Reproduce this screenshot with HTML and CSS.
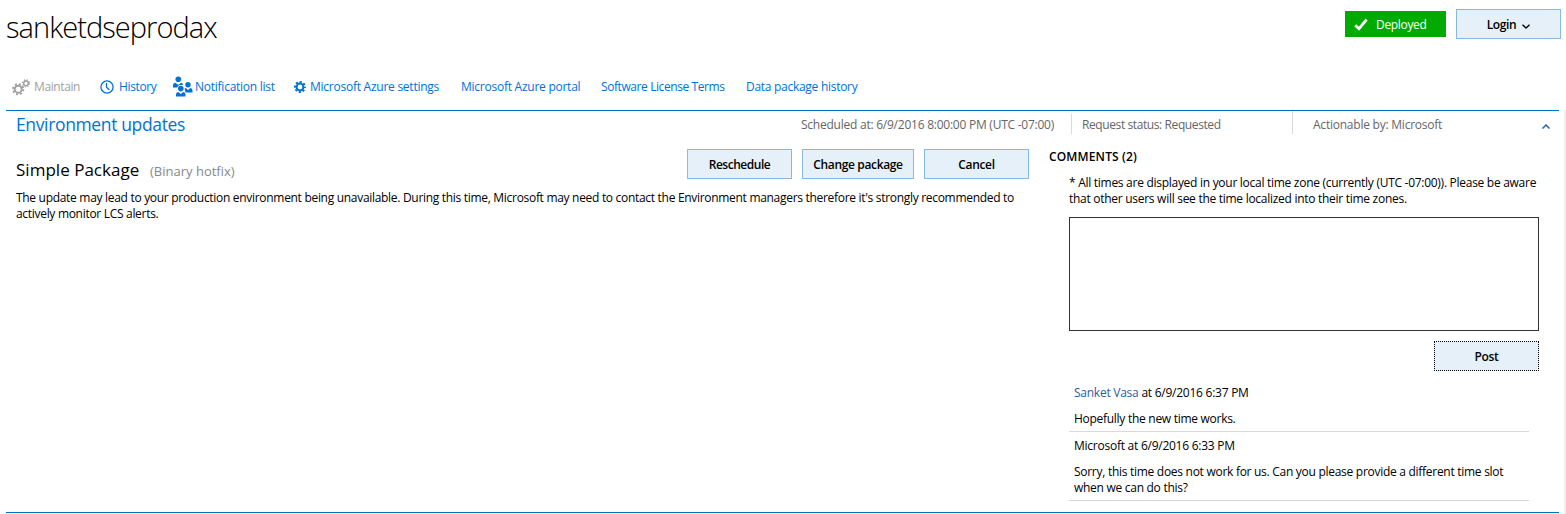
FILE: index.html
```html
<!DOCTYPE html>
<html lang="en">
<head>
<meta charset="utf-8">
<title>sanketdseprodax</title>
<link rel="stylesheet" href="styles.css">
</head>
<body>
<div class="page">
  <header class="top">
    <h1 class="title">sanketdseprodax</h1>
    <div class="status">
      <svg class="check" viewBox="0 0 14 13"><path d="M1.2 7.2 5 10.8 12.6 1.5" fill="none" stroke="#fff" stroke-width="2.8"/></svg>
      <span>Deployed</span>
    </div>
    <button class="btn login">Login<svg class="caret" viewBox="0 0 8 5"><path d="M.5.7 4 4 7.5.7" fill="none" stroke="#000" stroke-width="1.3"/></svg></button>
  </header>
  <nav class="toolbar">
    <a class="tool maintain"><svg class="gears" viewBox="0 0 18 17"><g fill="none" stroke="#a0a0a0"><circle cx="6.2" cy="10.2" r="3.5" stroke-width="1.9"/><circle cx="6.2" cy="10.2" r="5.1" stroke-width="2" stroke-dasharray="2 2.005"/><circle cx="14" cy="4.3" r="2.3" stroke-width="1.4"/><circle cx="14" cy="4.3" r="3.5" stroke-width="1.2" stroke-dasharray="1.4 1.349"/></g></svg>Maintain</a>
    <a class="tool history"><svg class="clock" viewBox="0 0 14 14"><g fill="none" stroke="#0072d6" stroke-width="1.3"><circle cx="7" cy="7" r="6.1"/><path d="M6.5 3v4.3L9.4 10"/></g></svg>History</a>
    <a class="tool notify"><svg class="people" viewBox="0 0 20 21"><g fill="#0072d6"><circle cx="5.3" cy="3.3" r="2.8"/><path d="M0 11.500V9.300Q0 7 2.500 6.800L5.200 9 8 6.800Q10 7 10 8.800L5 11.500Z"/><circle cx="15" cy="8.800" r="2.700"/><path d="M11.500 12.500 12.800 12 15 14 17.300 12Q19.500 12.200 19.500 14.500V16.500H12.500Z"/><circle cx="7.800" cy="12.600" r="3.600" fill="#fff"/><circle cx="7.800" cy="12.600" r="2.800"/><path d="M3 20.500V18.500Q3 16.300 5.200 16.100L7.800 18 10.300 16.100Q12.500 16.300 12.500 18.500V20.500Z"/></g></svg>Notification list</a>
    <a class="tool settings"><svg class="gear" viewBox="0 0 12 12"><g fill="none" stroke="#0072d6"><circle cx="6" cy="6" r="3.4" stroke-width="2"/><circle cx="6" cy="6" r="5" stroke-width="2" stroke-dasharray="2.100 1.827" stroke-dashoffset="1"/></g></svg>Microsoft Azure settings</a>
    <a class="tool portal">Microsoft Azure portal</a>
    <a class="tool terms">Software License Terms</a>
    <a class="tool data">Data package history</a>
  </nav>
  <div class="panel">
    <section class="updates">
      <div class="summary">
        <h2 class="heading">Environment updates</h2>
        <div class="fact scheduled">Scheduled at: 6/9/2016 8:00:00 PM (UTC -07:00)</div>
        <div class="fact request">Request status: Requested</div>
        <div class="fact action">Actionable by: Microsoft</div>
        <svg class="collapse" viewBox="0 0 8 5"><path d="M.5 4.500 4 1 7.500 4.500" fill="none" stroke="#2465b0" stroke-width="1.500"/></svg>
      </div>
      <div class="body">
        <div class="details">
          <div class="package">
            <h3 class="name">Simple Package</h3>
            <span class="kind">(Binary hotfix)</span>
            <div class="actions">
              <button class="btn reschedule">Reschedule</button>
              <button class="btn wide">Change package</button>
              <button class="btn">Cancel</button>
            </div>
          </div>
          <p class="warning">The update may lead to your production environment being unavailable. During this time, Microsoft may need to contact the Environment managers therefore it's strongly recommended to<br>actively monitor LCS alerts.</p>
        </div>
        <aside class="comments">
          <h4 class="count">COMMENTS (2)</h4>
          <p class="note">* All times are displayed in your local time zone (currently (UTC -07:00)). Please be aware<br>that other users will see the time localized into their time zones.</p>
          <textarea class="entry"></textarea>
          <button class="btn post">Post</button>
          <article class="comment">
            <p class="author"><a class="person">Sanket Vasa</a> at 6/9/2016 6:37 PM</p>
            <p class="text">Hopefully the new time works.</p>
          </article>
          <article class="comment">
            <p class="author">Microsoft at 6/9/2016 6:33 PM</p>
            <p class="text">Sorry, this time does not work for us. Can you please provide a different time slot<br>when we can do this?</p>
          </article>
        </aside>
      </div>
    </section>
    <div class="track"></div>
  </div>
</div>
</body>
</html>
```
FILE: styles.css
```css
* { box-sizing: border-box; }
body { margin: 0; background: #fff; color: #000; font: 12px/16px "Open Sans", "Noto Sans", sans-serif; letter-spacing: -.28px; }
h1, h2, h3, h4, p { margin: 0; font-weight: 400; white-space: nowrap; }
svg { display: block; flex: none; }
.page { height: 514px; overflow: hidden; display: flex; flex-direction: column; }

.top { height: 70px; display: flex; align-items: flex-start; padding: 9px 5px 0 6px; }
.title { flex: 1; font-size: 29px; line-height: 36px; font-weight: 300; letter-spacing: -.95px; }
.status { width: 101px; height: 26px; margin: 2px 10px 0 0; padding: 2px 0 0 9px; background: #00aa00; color: #fff; display: flex; align-items: center; letter-spacing: -.33px; }
.check { width: 14px; height: 13px; margin: 0 8px 1px 0; }
.btn { width: 105px; height: 30px; padding: 2px 0 0; border: 1px solid #86b9e3; background: #e5f0f9; color: #000; font: 600 12px/16px "Open Sans", "Noto Sans", sans-serif; letter-spacing: -.35px; display: flex; align-items: center; justify-content: center; white-space: nowrap; }
.caret { width: 8px; height: 5px; margin: 2px 0 0 6px; }

.toolbar { height: 40px; display: flex; padding-left: 12px; color: #0072d6; letter-spacing: -.25px; }
.tool { display: flex; align-items: center; height: 34px; white-space: nowrap; }
.maintain { width: 88px; color: #a0a0a0; letter-spacing: -.4px; }
.gears { width: 18px; height: 17px; margin-right: 4px; }
.history { width: 73px; letter-spacing: -.36px; }
.clock { width: 14px; height: 14px; margin-right: 5px; }
.notify { width: 121px; }
.people { width: 20px; height: 21px; margin: 0 2px 2px 0; }
.settings { width: 167px; }
.gear { width: 12px; height: 12px; margin-right: 4px; }
.portal { width: 140px; }
.terms { width: 145px; letter-spacing: -.41px; }
.data { letter-spacing: -.28px; }

.panel { flex: 1; display: flex; padding-left: 6px; }
.updates { width: 1553px; height: 403px; border-top: 1px solid #0072c6; border-bottom: 1px solid #0072c6; }
.track { width: 2px; margin-left: 5px; background: #f0f0f0; }
.summary { height: 30px; display: flex; align-items: flex-start; padding-left: 10px; color: #666; }
.heading { width: 785px; font-size: 17.5px; line-height: 27px; color: #0072d6; letter-spacing: -.36px; }
.fact { height: 20px; margin-top: 3px; line-height: 22px; white-space: nowrap; }
.scheduled { width: 270px; letter-spacing: -.24px; }
.request { width: 221px; border-left: 1px solid #d9d9d9; padding-left: 10px; letter-spacing: -.4px; }
.action { width: 250px; height: 23px; margin-top: 0; padding: 3px 0 0 20px; border-left: 1px solid #d9d9d9; letter-spacing: -.23px; }
.collapse { width: 8px; height: 5px; margin-top: 13px; }

.body { display: flex; padding-left: 10px; }
.details { width: 1033px; padding-top: 8px; }
.package { display: flex; width: 1013px; height: 40px; }
.name { width: 134px; font-size: 17px; line-height: 41px; letter-spacing: .02px; }
.kind { font-size: 13px; line-height: 44px; color: #888; white-space: nowrap; letter-spacing: 0; }
.actions { display: flex; gap: 10px; margin-left: auto; }
.reschedule { letter-spacing: -.48px; }
.wide { width: 112px; }
.warning { padding-top: 1px; letter-spacing: -.302px; }

.comments { width: 490px; padding-top: 8px; display: flex; flex-direction: column; }
.count { font-weight: 600; letter-spacing: .15px; }
.note { padding: 10px 0 0 20px; }
.entry { display: block; width: 470px; height: 114px; margin: 10px 0 0 20px; border: 1px solid #333; resize: none; background: #fff; }
.post { align-self: flex-end; margin: 10px 0 8px; border: 1px dotted #000; }
.comment { width: 460px; margin-left: 20px; padding: 6px 5px 4px; border-bottom: 1px solid #d9d9d9; }
.author { padding-bottom: 10px; letter-spacing: -.25px; }
.person { color: #2f5c9e; }
```
